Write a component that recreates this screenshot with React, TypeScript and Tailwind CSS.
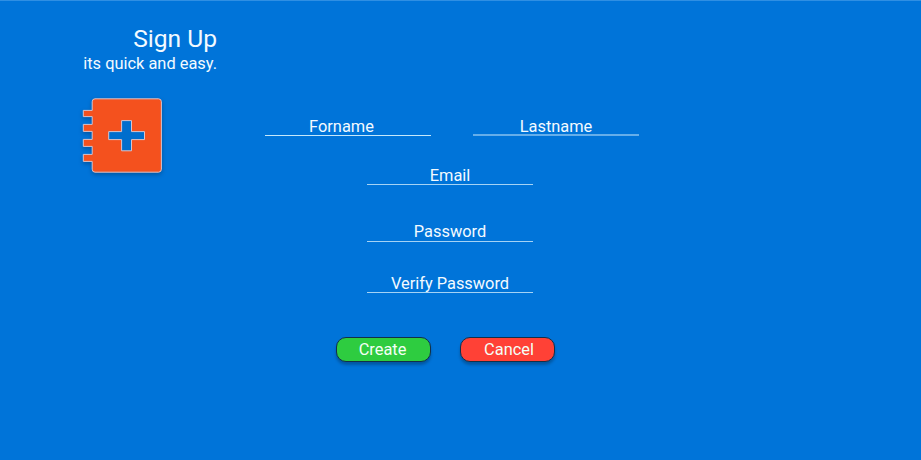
import React from 'react';

function Field({ label, className }: { label: string; className: string }) {
  return (
    <label className={`block w-[166px] text-center text-[16.4px] ${className}`}>
      {label}
    </label>
  );
}

function Button({ label, className }: { label: string; className: string }) {
  return (
    <button
      type="button"
      className={`h-[25px] w-[95px] rounded-[10px] border border-[#12304a] text-center text-[16.4px] leading-[23px] text-[#f4fff6] shadow-[0_3px_3px_rgba(0,0,0,0.25)] ${className}`}
    >
      {label}
    </button>
  );
}

function NotebookIcon() {
  return (
    <svg
      width="85"
      height="82"
      viewBox="80 95 85 82"
      className="block drop-shadow-[0_2px_2px_rgba(0,0,0,0.25)]"
      stroke="#d8c3cc"
      strokeWidth="1"
    >
      <path
        fill="#f4511e"
        d="M95 98.8H158.5Q161.4 98.8 161.4 101.8V169.2Q161.4 172.2 158.5 172.2H95Q92.2 172.2 92.2 169.2V161.4H83.3V154.4H92.2V146.4H83.3V139.4H92.2V131.4H83.3V124.4H92.2V116.6H83.3V110.4H92.2V101.8Q92.2 98.8 95 98.8Z"
      />
      <path fill="#006ecd" d="M121.6 120.6V131.6H108.7V139.6H121.6V150.8H131.5V139.6H144.5V131.6H131.5V120.6Z" />
    </svg>
  );
}

export default function App() {
  return (
    <main className="flex h-[460px] w-[921px] overflow-hidden border-t border-[#2f8fe3] bg-[#0074d9] font-['Roboto',sans-serif] text-[#f3faff]">
      <header className="w-[217px] shrink-0 pt-[23px] text-right">
        <h1 className="text-[24.6px] leading-[29px]">Sign Up</h1>
        <p className="pt-px text-[16.4px] leading-[19px]">its quick and easy.</p>
        <div className="mt-[22px] pl-20">
          <NotebookIcon />
        </div>
      </header>
      <form className="ml-12 w-[374px] pt-[115px]">
        <div className="flex items-start justify-between">
          <Field label="Forname" className="h-5 border-b border-[#c5e8fb] pr-[13px] leading-[21px]" />
          <Field label="Lastname" className="h-5 border-b-2 border-[#65aeea] leading-[21px]" />
        </div>
        <div className="pl-[102px]">
          <Field label="Email" className="mt-[29px] h-5 border-b border-[#a5d3f5] leading-[21px]" />
          <Field label="Password" className="mt-[37px] h-5 border-b border-[#a5d3f5] leading-[19px]" />
          <Field label="Verify Password" className="mt-[31px] h-5 border-b border-[#a5d3f5] leading-[21px]" />
        </div>
        <div className="mt-11 flex gap-[29px] pl-[71px]">
          <Button label="Create" className="bg-[#2ecc40] pr-[2px]" />
          <Button label="Cancel" className="bg-[#ff4136] pl-[3px]" />
        </div>
      </form>
    </main>
  );
}
